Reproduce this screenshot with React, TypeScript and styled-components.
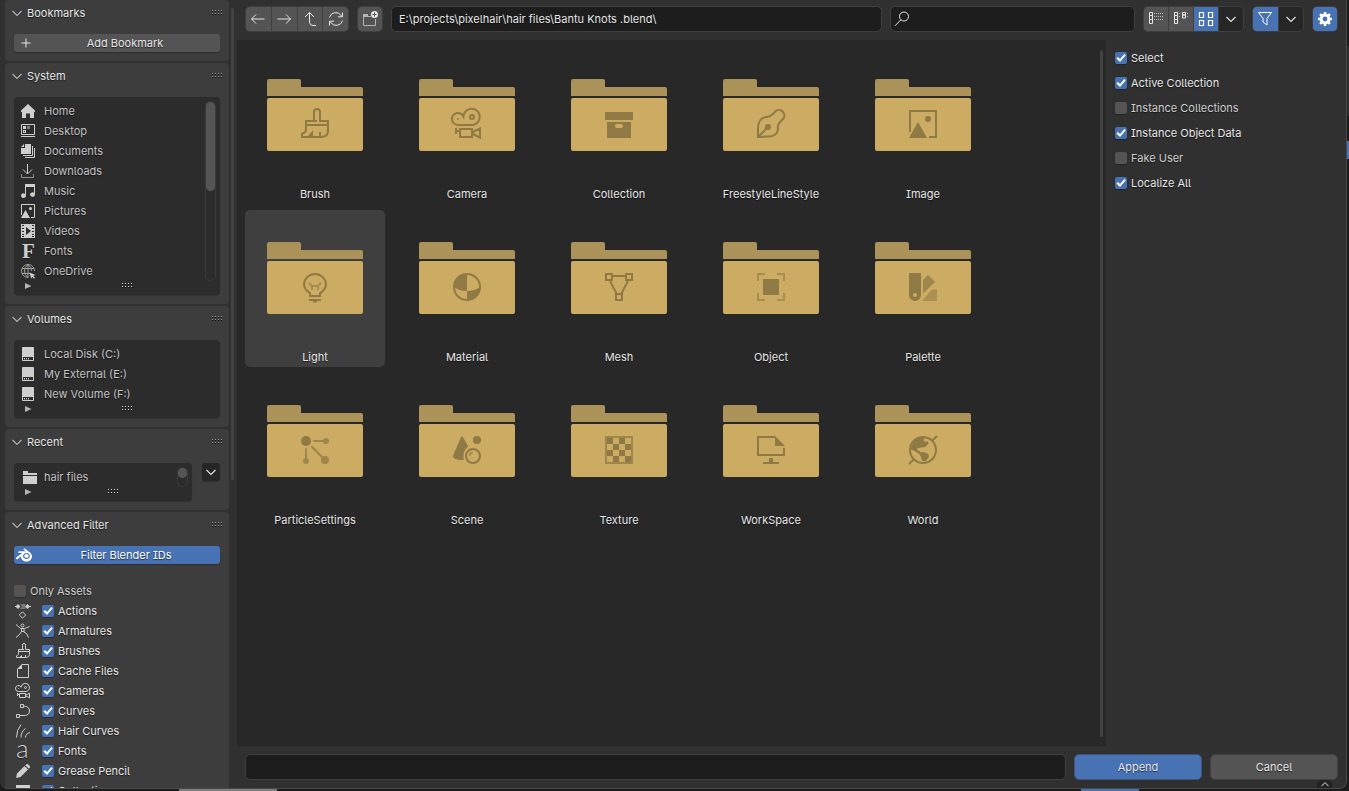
import React, { useState } from "react";
import styled, { createGlobalStyle, css } from "styled-components";
import { SiBlender } from "react-icons/si";

const color = {
  desk: "#1b1b1b",
  region: "#303030",
  panel: "#3d3d3d",
  list: "#2c2c2c",
  files: "#282828",
  field: "#1d1d1d",
  button: "#545454",
  menu: "#262626",
  edge: "#3f3f3f",
  accent: "#4772b3",
  text: "#e6e6e6",
  dim: "#c2c2c2",
};

const GlobalStyle = createGlobalStyle`
  *, *::before, *::after { box-sizing: border-box; }
  body {
    margin: 0;
    background: ${color.desk};
    color: ${color.text};
    font: 11px/16px Inter, "Liberation Sans", sans-serif;
    font-feature-settings: "cv05", "cv08";
    text-shadow: 0 1px 1px rgba(0, 0, 0, 0.6);
    overflow: hidden;
  }
  button, input { font: inherit; font-feature-settings: inherit; color: inherit; text-shadow: inherit; }
  svg { display: block; flex: none; }
`;

/* ---------- icons, all on a 16 unit grid ---------- */

const line = { fill: "none", stroke: "currentColor" };

const glyphs: Record<string, React.ReactNode> = {
  brush: (
    <g {...line}>
      <path d="M7.5 6.5V2a1.5 1.5 0 0 1 3 0V6.5H14.5V8.5H3.5V6.5H9" />
      <path d="M3.5 8.5v2q0 1.4-.8 1.8l-1.2.6v1.6h9.8q3.2-.2 3.2-3.2V8.5" />
      <path d="M4.8 14.5 6.5 12.5v1.5M10.5 14.5v-2.5" />
    </g>
  ),
  camera: (
    <g {...line}>
      <path d="M3.5 8.5A3 3 0 1 1 6.2 4.2A4.1 4.1 0 1 1 11 8.5Z" />
      <circle cx="10.5" cy="4.5" r="1" />
      <circle cx="3.5" cy="5.5" r=".5" fill="currentColor" stroke="none" />
      <path d="M4.5 10.5h6v4h-6zM11 12l3.5-1.8v4.6L11 13M2.5 10v3M2.5 11.5h2" />
    </g>
  ),
  collection: (
    <path
      fill="currentColor"
      fillRule="evenodd"
      d="M1 2h14v4H1zM2 7h12v8H2zM7 8a1 1 0 0 0 0 2h2a1 1 0 0 0 0-2z"
    />
  ),
  freestyle: (
    <g {...line}>
      <path d="M1.5 14.5V10Q1.7 5 5.5 4.5 7.3 4.6 8.5 3.3L10.3 1.6A2.7 2.7 0 0 1 14 5.5L12.2 7.4Q11.2 8.3 11.5 10.5 11.2 14.2 6.5 14.3Z" />
      <path d="M1.5 14.5 6.5 9.5" />
      <circle cx="6.5" cy="9.5" r="1.5" fill="currentColor" stroke="none" />
    </g>
  ),
  image: (
    <g>
      <path {...line} d="M1.5 12V1.5h13v13H11" />
      <path fill="currentColor" d="M5.5 7 10 15H1z" />
      <circle fill="currentColor" cx="10.5" cy="5.5" r="1.5" />
    </g>
  ),
  light: (
    <g {...line}>
      <path d="M5.5 12.5v-1.3Q2.5 9 2.5 6.8a5.5 5.3 0 0 1 11 0Q13.5 9 10.5 11.2v1.3z" />
      <path d="M5 6l1.5 1.5h3L11 6M6.5 9.5v-2M9.5 7.5v2" opacity=".6" />
      <path d="M5 14.5h6M7 15.3h2" />
    </g>
  ),
  material: (
    <g>
      <circle {...line} cx="8" cy="8" r="6.5" />
      <path fill="currentColor" d="M8 1.5V10Q4 10 1.5 8A6.5 6.5 0 0 1 8 1.5zM8 10q4 0 6.5-2A6.5 6.5 0 0 1 8 14.5z" />
    </g>
  ),
  mesh: (
    <g {...line}>
      <path d="M1.5 1.5h3v3h-3zM11.5 1.5h3v3h-3zM6.5 11.5h3v3h-3z" />
      <path d="M5 2.5h6M3.5 5 6.8 11.3M12.5 5 9.2 11.3" />
    </g>
  ),
  object: (
    <g>
      <path {...line} opacity=".6" d="M1.5 5V1.5H5M11 1.5h3.5V5M14.5 11v3.5H11M5 14.5H1.5V11" />
      <rect fill="currentColor" x="4" y="4" width="8" height="8" rx=".4" />
    </g>
  ),
  palette: (
    <g fill="currentColor">
      <path fillRule="evenodd" d="M1 1.4Q1 1 1.4 1h5.2Q7 1 7 1.4V12a3 3 0 0 1-6 0zM4 11a1 1 0 1 0 0 2 1 1 0 0 0 0-2z" />
      <path opacity=".75" d="M8 4.5 10.5 2 14 5.5 8 11.2z" />
      <path opacity=".55" d="M7.5 15l5-5.8H15V15z" />
    </g>
  ),
  particles: (
    <g>
      <circle fill="currentColor" cx="3.5" cy="3.5" r="2.5" />
      <g opacity=".75">
        <path {...line} strokeLinecap="round" d="M7.5 3.5H12M3.5 7.5V12M6.5 6.5l5 5" />
        <g fill="currentColor">
          <circle cx="13.5" cy="3.5" r="1.5" />
          <circle cx="3.5" cy="13.5" r="1.5" />
          <circle cx="13" cy="13" r="2" />
        </g>
      </g>
    </g>
  ),
  scene: (
    <g>
      <path fill="currentColor" d="M5 1.6q.5-1 1 0L8.6 6.2Q6.2 8.2 6.2 11q0 1 .3 1.9-3.9.5-5.3-1.1-.4-.5 0-1.4z" />
      <circle fill="currentColor" cx="13" cy="3" r="2" />
      <circle {...line} cx="11" cy="11" r="3.5" />
      <path {...line} opacity=".7" d="M9.3 10.8q.2-1.3 1.5-1.6" />
    </g>
  ),
  texture: (
    <g>
      <rect {...line} opacity=".75" x="1.5" y="1.5" width="13" height="13" />
      <path
        fill="currentColor"
        d="M2 2h3v3H2zM8 2h3v3H8zM5 5h3v3H5zM11 5h3v3h-3zM2 8h3v3H2zM8 8h3v3H8zM5 11h3v3H5zM11 11h3v3h-3z"
      />
    </g>
  ),
  workspace: (
    <g>
      <path {...line} d="M10 1.5H1.5v9h13V7" />
      <path fill="currentColor" d="M10 1l5 5h-5zM7 12h2v2h3v1H4v-1h3z" />
    </g>
  ),
  world: (
    <g>
      <circle {...line} cx="8" cy="8" r="6.5" />
      <path {...line} d="M12.8 3.2 15 1M3.2 12.8 1 15" />
      <path
        fill="currentColor"
        d="M3 4 6.5 1.6 9 2l-.8 1 .6.9 1.7-.2.3 1.1L9 6.5 6.9 6.7 5 7.2l.2.9 1.1.3.1.7 2-.1 2.4 1.1.2 1.3-1.6 2.2-1.9-.2-.6-2.2L6 9.9 4.2 8.8 1.8 7.5z"
      />
    </g>
  ),
  home: <path fill="currentColor" d="M8 1l7 6.6V9h-1v6h-4v-4.5H6V15H2V9H1V7.6z" />,
  desktop: (
    <g>
      <path {...line} d="M1.5 1.5h13v10h-13zM1 13.5h14" />
      <path fill="currentColor" d="M3 3h3v3H3zM3 7h3v3H3z" />
      <path fill="#2c2c2c" d="M4 8h1v1H4z" />
      <path fill="currentColor" opacity=".5" d="M7 3h3v3H7z" />
    </g>
  ),
  documents: (
    <g>
      <path fill="currentColor" d="M5 1h6v10H1V5h4zM4 1v3H1z" />
      <path {...line} d="M12.5 3v9.5H3M14.5 5v9.5H5" />
    </g>
  ),
  downloads: (
    <g {...line}>
      <path d="M7.5 1v9.5M3 6.5l4.5 4.5L12 6.5" />
      <path opacity=".6" d="M1.5 11v3.5h12V11" />
    </g>
  ),
  music: (
    <path
      fill="currentColor"
      d="M5 1h10v10.5a2.5 2.2 0 1 1-1-1.7V4H6v8.8A2.5 2.2 0 1 1 5 11z"
    />
  ),
  video: (
    <path
      fill="currentColor"
      fillRule="evenodd"
      d="M1 1h14v14H1zM2 2v1h2V2zM2 5v1h2V5zM2 8v1h2V8zM2 11v1h2v-1zM12 2v1h2V2zM12 5v1h2V5zM12 8v1h2V8zM12 11v1h2v-1zM2 13v1h2v-1zM12 13v1h2v-1zM6 4v8l5-4z"
    />
  ),
  serif: (
    <text x="2" y="15" fill="currentColor" fontFamily="Liberation Serif, serif" fontWeight="700" fontSize="21">
      F
    </text>
  ),
  globe: (
    <g>
      <g {...line} opacity=".7">
        <path d="M14.5 8A6.5 6.5 0 1 0 8 14.5M8 1.5v13M2 5.5h12M2 10.5h8" />
        <path d="M8 1.5Q4.5 4 4.5 8t3.5 6.5M8 1.5Q11.5 4 11.5 8" />
      </g>
      <path fill="currentColor" d="M9.5 9.5l6 2.5-2.3.8 1.8 2-1 .9-1.8-2-1 2z" />
    </g>
  ),
  disk: (
    <path
      fill="currentColor"
      fillRule="evenodd"
      d="M3 1h10q1 0 1 1v12q0 1-1 1H3q-1 0-1-1V2q0-1 1-1zM3 11v3h10v-3zM4 12h1v1.5H4zM6 12h1v1.5H6zM8 12h1v1.5H8z"
    />
  ),
  folder: <path fill="currentColor" d="M3 2h5v2h9v2H3zM3 7h14v8H3z" />,
  action: (
    <g>
      <path fill="currentColor" d="M3 1l2.5 2.5L3 6 .5 3.5zM12.500 1 15 3.500 12.500 6 10 3.500z" />
      <path fill="currentColor" d="M0 3h4v1H0zM12 3h4v1h-4z" />
      <path fill="currentColor" opacity=".4" d="M5 1h5.500v5H5L7 3.500z" />
      <path {...line} d="M7.500 8.800 10.700 12l-3.200 3.200L4.300 12z" />
    </g>
  ),
  armature: (
    <g {...line}>
      <circle cx="7.5" cy="2.5" r="1.5" />
      <path d="M1 1.5 5.5 5.5H9.5L14.5 3.5M6.5 6v2.500L4.500 11.500 1 14.500M9 6v3l2.500 1.500 2 4M6.500 8.500H9" />
    </g>
  ),
  cache: (
    <g>
      <path {...line} d="M7 1.5h6.5v13h-11V6" />
      <path fill="currentColor" d="M7 1v5H2z" />
    </g>
  ),
  curve: (
    <g {...line}>
      <path d="M5.5 1.5h3v3h-3zM1.5 11.5h3v3h-3z" />
      <path d="M9 3q5.5.6 5.5 5T9 12.5H5" />
    </g>
  ),
  hair: (
    <path {...line} d="M1.5 14.5Q1.5 7 6 1.5M6 14.5Q6 8.5 10.5 5.5M10.5 14.5q.2-3.8 4.5-5" />
  ),
  letter: (
    <text x="1" y="14.5" fill="currentColor" fontFamily="Lato, Inter, sans-serif" fontWeight="300" fontSize="26">
      a
    </text>
  ),
  pencil: (
    <path
      fill="currentColor"
      d="M1 15l1-4.5L9.500 3 13 6.500 5.500 14zM10.300 2.200l1-1q1-.7 2 .2l1.300 1.300q.9 1 .2 2l-1 1z"
    />
  ),
  back: <path {...line} d="M14.5 8H1.5M6 3.5 1.5 8 6 12.5" />,
  forward: <path {...line} d="M1.5 8h13M10 3.5 14.5 8 10 12.5" />,
  up: <path {...line} d="M7.5 1.5v9.5q0 3.5 3.5 3.5h3M3 6l4.5-4.5L12 6" />,
  refresh: (
    <path
      {...line}
      d="M1.5 6.5A6.5 6.5 0 0 1 13 4.2l1.5 1.5M14.5 1.5v4.3H10M14.5 9.5A6.5 6.5 0 0 1 3 11.8l-1.5-1.5M1.5 14.5v-4.3H6"
    />
  ),
  newFolder: (
    <g>
      <g opacity=".65">
        <path fill="currentColor" d="M1 3h5v2h3v1H1z" />
        <path {...line} d="M1.5 6v8.5h12V8" />
      </g>
      <circle fill="currentColor" cx="12.5" cy="3.5" r="3.5" />
      <path stroke="#545454" d="M12.5 1.5v4M10.5 3.5h4" />
    </g>
  ),
  search: (
    <g {...line}>
      <circle cx="10" cy="5.5" r="4.5" />
      <path d="M6.8 8.8 1 14.8" />
    </g>
  ),
  viewList: (
    <g>
      <path {...line} d="M1.5 1.5h3v3h-3zM1.5 4.5h3v4h-3zM1.5 8.5h3v4h-3z" />
      <path {...line} strokeDasharray="1 1" opacity=".7" d="M6 2.5h9M6 5.5h9M6 8.5h9" />
    </g>
  ),
  viewColumns: (
    <g>
      <path {...line} d="M1.5 1.5h3v3h-3zM1.5 4.5h3v4h-3zM1.5 8.5h3v4h-3zM9.5 1.5h3v2.5h-3zM9.5 4h3v3h-3z" />
      <path {...line} strokeDasharray="1 1" opacity=".7" d="M6 2.5h2M6 5.5h2M14 2.5h2M14 5.5h2" />
    </g>
  ),
  viewGrid: (
    <path {...line} strokeWidth="1.2" d="M1.5 1.5h4v5h-4zM10.5 1.5h4v5h-4zM1.5 9.5h4v5h-4zM10.5 9.5h4v5h-4z" />
  ),
  filter: <path {...line} d="M1.5 1.5h13L10 7.5v6.5l-4-3V7.5z" />,
  gear: (
    <g>
      <circle {...line} cx="8" cy="8" r="3.9" strokeWidth="3" />
      {[0, 45, 90, 135].map((turn) => (
        <g key={turn} transform={`rotate(${turn} 8 8)`} fill="currentColor">
          <rect x="6.7" y="1" width="2.6" height="3" rx=".4" />
          <rect x="6.7" y="12" width="2.6" height="3" rx=".4" />
        </g>
      ))}
    </g>
  ),
  plus: <path {...line} d="M8 3.5v9M3.5 8h9" />,
  chevron: <path {...line} strokeWidth="1.1" d="M3.5 6 8 10.5 12.5 6" />,
  chevronUp: <path {...line} strokeWidth="1.3" d="M4 10.5 8 6.5 12 10.5" />,
};

const Icon = ({ name, size = 16 }: { name: string; size?: number }) => (
  <svg width={size} height={size} viewBox="0 0 16 16" overflow="visible" aria-hidden="true">
    {glyphs[name]}
  </svg>
);

const GripDots = ({ tone = "#9a9a9a" }: { tone?: string }) => (
  <svg width="11" height="6" viewBox="0 0 11 6" shapeRendering="crispEdges" aria-hidden="true">
    {[0, 3, 6, 9].map((x) => (
      <g key={x}>
        <path fill="#0c0c0c" d={`M${x} 1h1v1h-1zM${x} 4h1v1h-1z`} />
        <path fill={tone} d={`M${x} 0h1v1h-1zM${x} 3h1v1h-1z`} />
      </g>
    ))}
  </svg>
);

/* ---------- frame ---------- */

const Desk = styled.div`
  position: relative;
  height: 100vh;
  padding: 0 2px 2px 0;
`;

const DeskPiece = styled.i<{ $tone: string }>`
  position: absolute;
  background: ${(p) => p.$tone};
`;

const BottomPiece = styled(DeskPiece)<{ $from: number; $length: number }>`
  bottom: 0;
  height: 2px;
  left: ${(p) => p.$from}px;
  width: ${(p) => p.$length}px;
`;

const RightPiece = styled(DeskPiece)<{ $from: number; $length: number }>`
  right: 0;
  width: 3px;
  top: ${(p) => p.$from}px;
  height: ${(p) => p.$length}px;
`;

const Dialog = styled.div`
  position: relative;
  display: flex;
  height: 100%;
  background: ${color.region};
  border: solid #4a4a4a;
  border-width: 0 1px 1px 0;
  border-radius: 0 0 8px 8px;
  overflow: hidden;
`;

const Expander = styled.button`
  position: absolute;
  right: 14px;
  bottom: 0;
  display: flex;
  justify-content: center;
  align-items: center;
  width: 15px;
  height: 8px;
  padding: 0;
  border: 0;
  border-radius: 5px 5px 0 0;
  background: #222;
  color: #aaa;
`;

const Main = styled.main`
  flex: 1;
  min-width: 0;
  display: flex;
  flex-direction: column;
`;

const Middle = styled.div`
  flex: 1;
  min-height: 0;
  display: flex;
`;

/* ---------- sidebar ---------- */

const Sidebar = styled.aside`
  flex: none;
  display: flex;
  width: 237px;
  padding-left: 5px;
  overflow: hidden;
`;

const PanelStack = styled.div`
  display: flex;
  flex-direction: column;
  gap: 2px;
  width: 224px;
`;

const SideScroll = styled.div`
  width: 3px;
  height: 472px;
  margin: 8px 0 0 2px;
  border-radius: 2px;
  background: #434343;
`;

const PanelBox = styled.section`
  flex: none;
  background: ${color.panel};
  border-radius: 4px;
`;

const PanelHeader = styled.h2`
  display: flex;
  align-items: center;
  justify-content: space-between;
  height: 26px;
  margin: 0;
  padding: 0 6px 0 4px;
  font-size: 11px;
  font-weight: 400;
`;

const PanelToggle = styled.button`
  display: flex;
  align-items: center;
  gap: 2px;
  padding: 0;
  border: 0;
  background: none;
  svg { color: #b4b4b4; }
`;

const PanelBody = styled.div`
  padding: 8px 9px 9px;
`;

const WideButton = styled.button<{ $active?: boolean }>`
  display: flex;
  align-items: center;
  width: 100%;
  height: 18px;
  padding: 0 ${(p) => (p.$active ? "0 0 2px" : "4px")};
  border: 0;
  border-radius: 3px;
  background: ${(p) => (p.$active ? color.accent : color.button)};
  color: ${(p) => (p.$active ? "#fff" : color.text)};
  box-shadow: 0 1px 1px rgba(0, 0, 0, 0.25);
`;

const WideLabel = styled.span`
  flex: 1;
  text-align: center;
`;

const ListRow = styled.div`
  display: flex;
  align-items: flex-start;
  gap: 10px;
`;

const ListBox = styled.div`
  flex: 1;
  min-width: 0;
  border-radius: 4px;
  background: ${color.list};
  box-shadow: 0 1px 1px rgba(0, 0, 0, 0.2);
  color: ${color.dim};
`;

const ListMain = styled.div`
  display: flex;
  padding: 4px 4px 0 0;
`;

const ListItems = styled.ul`
  flex: 1;
  margin: 0;
  padding: 0;
  list-style: none;
`;

const ListItem = styled.li`
  display: flex;
  align-items: center;
  gap: 8px;
  height: 20px;
  padding-left: 6px;
  svg { color: #cfcfcf; }
`;

const ListTrack = styled.div`
  width: 11px;
  border: 1px solid #3a3a3a;
  border-radius: 6px;
`;

const ListThumb = styled.div<{ $length: number }>`
  height: ${(p) => p.$length}px;
  border-radius: 5px;
  background: #555;
`;

const ListFoot = styled.div`
  display: flex;
  align-items: center;
  height: 14px;
  padding-bottom: 4px;
`;

const FootArrow = styled.span`
  flex: none;
  display: flex;
  justify-content: flex-end;
  width: 20px;
  padding-right: 2px;
`;

const FootGrip = styled.span`
  flex: 1;
  display: flex;
  justify-content: center;
`;

const MenuButton = styled.button`
  display: flex;
  align-items: center;
  justify-content: center;
  width: 18px;
  height: 18px;
  padding: 0;
  border: 0;
  border-radius: 3px;
  background: ${color.menu};
  box-shadow: 0 1px 1px rgba(0, 0, 0, 0.25);
`;

const FilterList = styled.div`
  padding-top: 17px;
`;

const FilterRow = styled.div`
  display: flex;
  align-items: center;
  gap: 11px;
  height: 20px;
  > svg { margin-left: 1px; color: #cfcfcf; }
`;

/* ---------- tick boxes ---------- */

const CheckLabel = styled.label<{ $on: boolean }>`
  display: flex;
  align-items: center;
  gap: 4px;
  color: ${(p) => (p.$on ? color.text : "#cfcfcf")};
  white-space: nowrap;
`;

const CheckInput = styled.input`
  appearance: none;
  flex: none;
  width: 12px;
  height: 12px;
  margin: 0;
  border-radius: 2px;
  background: #545454;
  box-shadow: 0 1px 1px rgba(0, 0, 0, 0.25);

  &:checked { background: ${color.accent}; }
  &:checked::after {
    content: "";
    display: block;
    width: 12px;
    height: 12px;
    background: #fff;
    clip-path: polygon(12% 54%, 24% 42%, 42% 58%, 78% 16%, 90% 28%, 42% 84%);
  }
`;

const Check = ({ label, initial = true }: { label: string; initial?: boolean }) => {
  const [on, setOn] = useState(initial);
  return (
    <CheckLabel $on={on}>
      <CheckInput type="checkbox" checked={on} onChange={() => setOn(!on)} />
      {label}
    </CheckLabel>
  );
};

/* ---------- toolbar ---------- */

const Toolbar = styled.header`
  display: flex;
  align-items: center;
  gap: 8px;
  height: 40px;
  padding: 0 8px 2px;
`;

const ButtonGroup = styled.div<{ $width: number }>`
  flex: none;
  display: flex;
  gap: 1px;
  width: ${(p) => p.$width}px;
  height: 26px;
  border: 1px solid ${color.edge};
  border-radius: 5px;
  background: ${color.edge};
  overflow: hidden;
`;

const tones = {
  normal: css`background: ${color.button};`,
  active: css`background: ${color.accent}; color: #fff;`,
  menu: css`background: ${color.menu};`,
};

const ToolButton = styled.button<{ $tone?: keyof typeof tones }>`
  flex: 1;
  display: flex;
  align-items: center;
  justify-content: center;
  min-width: 0;
  padding: 0;
  border: 0;
  ${(p) => tones[p.$tone ?? "normal"]}
`;

const fieldBox = css`
  height: 26px;
  border: 1px solid ${color.edge};
  border-radius: 5px;
  background: ${color.field};
`;

const TextField = styled.input`
  ${fieldBox}
  flex: 2 1 18px;
  min-width: 0;
  padding: 0 7px;
  outline: 0;
`;

const SearchField = styled.label`
  ${fieldBox}
  flex: 1 1 9px;
  min-width: 0;
  display: flex;
  align-items: center;
  padding-left: 3px;
`;

const SearchInput = styled.input`
  flex: 1;
  min-width: 0;
  border: 0;
  outline: 0;
  background: none;
`;

/* ---------- file area ---------- */

const Files = styled.section`
  flex: 1;
  min-width: 0;
  display: flex;
  padding: 7px 3px 9px 8px;
  background: ${color.files};
`;

const TileGrid = styled.div`
  flex: 1;
  display: grid;
  grid-template-columns: repeat(auto-fill, 140px);
  align-content: start;
  gap: 6px 12px;
`;

const FilesScroll = styled.div`
  width: 3px;
  margin-top: 3px;
  border-radius: 2px;
  background: #424242;
`;

const Tile = styled.button<{ $hover?: boolean }>`
  display: flex;
  flex-direction: column;
  align-items: center;
  height: 157px;
  padding: 32px 0 0;
  border: 0;
  border-radius: 5px;
  background: ${(p) => (p.$hover ? "#3f3f3f" : "none")};
`;

const TileLabel = styled.span`
  padding-top: 35px;
`;

const FolderArt = ({ glyph }: { glyph: string }) => (
  <svg width="96" height="72" viewBox="0 0 96 72" aria-hidden="true">
    <path fill="#ab9259" d="M0 17V2q0-2 2-2h30q2 0 2 2v6h60q2 0 2 2v7z" />
    <rect fill="#ccab62" y="19" width="96" height="53" rx="2" />
    <g transform="translate(32 29) scale(2)" color="#8f7a46">
      {glyphs[glyph]}
    </g>
  </svg>
);

/* ---------- options and footer ---------- */

const Options = styled.aside`
  flex: none;
  display: flex;
  flex-direction: column;
  gap: 1px;
  width: 240px;
  padding: 6px 9px;
`;

const OptionRow = styled.div`
  display: flex;
  align-items: center;
  height: 24px;
`;

const Footer = styled.footer`
  display: flex;
  gap: 8px;
  padding: 8px;
`;

const ActionButton = styled.button<{ $primary?: boolean }>`
  flex: none;
  width: 128px;
  height: 26px;
  border: 1px solid ${(p) => (p.$primary ? "#3d5379" : color.edge)};
  border-radius: 5px;
  background: ${(p) => (p.$primary ? color.accent : color.button)};
`;

/* ---------- data ---------- */

const places = [
  ["Home", "home"],
  ["Desktop", "desktop"],
  ["Documents", "documents"],
  ["Downloads", "downloads"],
  ["Music", "music"],
  ["Pictures", "image"],
  ["Videos", "video"],
  ["Fonts", "serif"],
  ["OneDrive", "globe"],
];

const volumes = [
  ["Local Disk (C:)", "disk"],
  ["My External (E:)", "disk"],
  ["New Volume (F:)", "disk"],
];

const filters = [
  ["Actions", "action"],
  ["Armatures", "armature"],
  ["Brushes", "brush"],
  ["Cache Files", "cache"],
  ["Cameras", "camera"],
  ["Curves", "curve"],
  ["Hair Curves", "hair"],
  ["Fonts", "letter"],
  ["Grease Pencil", "pencil"],
  ["Collections", "collection"],
];

const folders = [
  ["Brush", "brush"],
  ["Camera", "camera"],
  ["Collection", "collection"],
  ["FreestyleLineStyle", "freestyle"],
  ["Image", "image"],
  ["Light", "light"],
  ["Material", "material"],
  ["Mesh", "mesh"],
  ["Object", "object"],
  ["Palette", "palette"],
  ["ParticleSettings", "particles"],
  ["Scene", "scene"],
  ["Texture", "texture"],
  ["WorkSpace", "workspace"],
  ["World", "world"],
];

const options: [string, boolean][] = [
  ["Select", true],
  ["Active Collection", true],
  ["Instance Collections", false],
  ["Instance Object Data", true],
  ["Fake User", false],
  ["Localize All", true],
];

/* ---------- parts ---------- */

const Panel = ({ title, children }: { title: string; children: React.ReactNode }) => (
  <PanelBox>
    <PanelHeader>
      <PanelToggle type="button">
        <Icon name="chevron" />
        {title}
      </PanelToggle>
      <GripDots />
    </PanelHeader>
    <PanelBody>{children}</PanelBody>
  </PanelBox>
);

const List = ({ rows, thumb }: { rows: string[][]; thumb?: number }) => (
  <ListBox>
    <ListMain>
      <ListItems>
        {rows.map(([label, icon]) => (
          <ListItem key={label}>
            <Icon name={icon} />
            {label}
          </ListItem>
        ))}
      </ListItems>
      {thumb !== undefined && (
        <ListTrack>
          <ListThumb $length={thumb} />
        </ListTrack>
      )}
    </ListMain>
    <ListFoot>
      <FootArrow>
        <svg width="7" height="6" viewBox="0 0 7 6" aria-hidden="true">
          <path fill="#b4b4b4" d="M0 0l6.5 3L0 6z" />
        </svg>
      </FootArrow>
      <FootGrip>
        <GripDots tone="#e0e0e0" />
      </FootGrip>
    </ListFoot>
  </ListBox>
);

export default function App() {
  const [path, setPath] = useState("E:\\projects\\pixelhair\\hair files\\Bantu Knots .blend\\");
  const [fileName, setFileName] = useState("");
  const [query, setQuery] = useState("");

  return (
    <Desk>
      <GlobalStyle />
      <BottomPiece $tone="#7d7d7d" $from={179} $length={98} />
      <BottomPiece $tone={color.accent} $from={1081} $length={58} />
      <RightPiece $tone="#2b2b2b" $from={46} $length={70} />
      <RightPiece $tone={color.accent} $from={141} $length={18} />
      <Dialog>
        <Sidebar>
          <PanelStack>
            <Panel title="Bookmarks">
              <WideButton type="button">
                <Icon name="plus" />
                <WideLabel>Add Bookmark</WideLabel>
              </WideButton>
            </Panel>
            <Panel title="System">
              <List rows={places} thumb={89} />
            </Panel>
            <Panel title="Volumes">
              <List rows={volumes} />
            </Panel>
            <Panel title="Recent">
              <ListRow>
                <List rows={[["hair files", "folder"]]} thumb={10} />
                <MenuButton type="button" aria-label="Recent menu">
                  <Icon name="chevron" />
                </MenuButton>
              </ListRow>
            </Panel>
            <Panel title="Advanced Filter">
              <WideButton type="button" $active>
                <SiBlender size={16} />
                <WideLabel>Filter Blender IDs</WideLabel>
              </WideButton>
              <FilterList>
                <FilterRow>
                  <Check label="Only Assets" initial={false} />
                </FilterRow>
                {filters.map(([label, icon]) => (
                  <FilterRow key={label}>
                    <Icon name={icon} />
                    <Check label={label} />
                  </FilterRow>
                ))}
              </FilterList>
            </Panel>
          </PanelStack>
          <SideScroll />
        </Sidebar>
        <Main>
          <Toolbar>
            <ButtonGroup $width={104}>
              <ToolButton type="button" aria-label="Back"><Icon name="back" /></ToolButton>
              <ToolButton type="button" aria-label="Forward"><Icon name="forward" /></ToolButton>
              <ToolButton type="button" aria-label="Parent folder"><Icon name="up" /></ToolButton>
              <ToolButton type="button" aria-label="Refresh"><Icon name="refresh" /></ToolButton>
            </ButtonGroup>
            <ButtonGroup $width={26}>
              <ToolButton type="button" aria-label="New folder"><Icon name="newFolder" /></ToolButton>
            </ButtonGroup>
            <TextField aria-label="Path" value={path} onChange={(e) => setPath(e.target.value)} />
            <SearchField>
              <Icon name="search" />
              <SearchInput aria-label="Search" value={query} onChange={(e) => setQuery(e.target.value)} />
            </SearchField>
            <ButtonGroup $width={101}>
              <ToolButton type="button" aria-label="Vertical list"><Icon name="viewList" /></ToolButton>
              <ToolButton type="button" aria-label="Horizontal list"><Icon name="viewColumns" /></ToolButton>
              <ToolButton type="button" aria-label="Thumbnails" $tone="active"><Icon name="viewGrid" /></ToolButton>
              <ToolButton type="button" aria-label="Display settings" $tone="menu"><Icon name="chevron" /></ToolButton>
            </ButtonGroup>
            <ButtonGroup $width={52}>
              <ToolButton type="button" aria-label="Filter" $tone="active"><Icon name="filter" /></ToolButton>
              <ToolButton type="button" aria-label="Filter settings" $tone="menu"><Icon name="chevron" /></ToolButton>
            </ButtonGroup>
            <ButtonGroup $width={26}>
              <ToolButton type="button" aria-label="Options" $tone="active"><Icon name="gear" /></ToolButton>
            </ButtonGroup>
          </Toolbar>
          <Middle>
            <Files>
              <TileGrid>
                {folders.map(([label, glyph]) => (
                  <Tile key={label} type="button" $hover={label === "Light"}>
                    <FolderArt glyph={glyph} />
                    <TileLabel>{label}</TileLabel>
                  </Tile>
                ))}
              </TileGrid>
              <FilesScroll />
            </Files>
            <Options>
              {options.map(([label, on]) => (
                <OptionRow key={label}>
                  <Check label={label} initial={on} />
                </OptionRow>
              ))}
            </Options>
          </Middle>
          <Footer>
            <TextField aria-label="File name" value={fileName} onChange={(e) => setFileName(e.target.value)} />
            <ActionButton type="button" $primary>Append</ActionButton>
            <ActionButton type="button">Cancel</ActionButton>
          </Footer>
        </Main>
        <Expander type="button" aria-label="Show region"><Icon name="chevronUp" size={14} /></Expander>
      </Dialog>
    </Desk>
  );
}
